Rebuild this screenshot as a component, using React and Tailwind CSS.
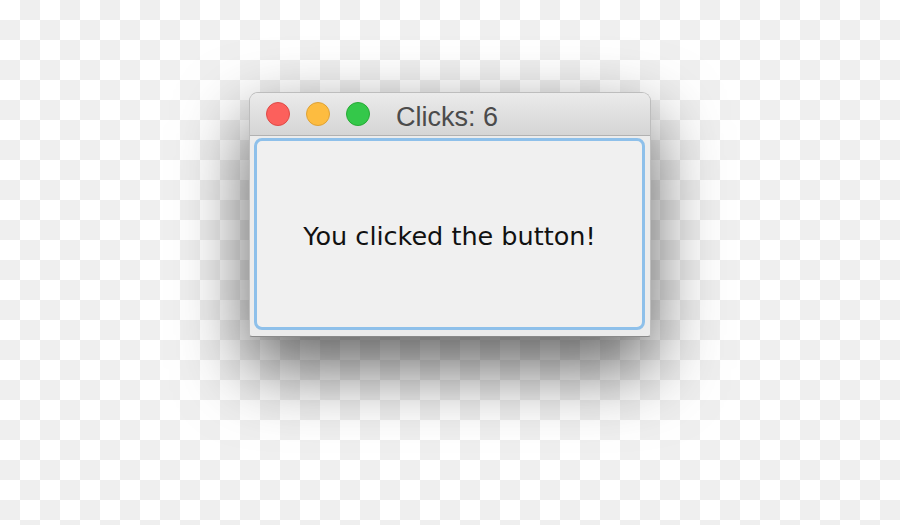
const Light = ({ fill, ring }) => (
    <span className={`w-[24px] h-[24px] rounded-full border ${fill} ${ring}`} />
);

export default function App() {
    return (
        <div className="w-full h-[525px] flex justify-center pt-[92px] bg-[repeating-conic-gradient(#efefef_0%_25%,#ffffff_0%_50%)] bg-[length:40px_40px]">
            <div className="w-[402px] h-[245px] flex flex-col bg-[#ececec] border border-[#bdbdbd] border-b-[#8a8a8a] rounded-t-[9px] rounded-b-[3px] shadow-[0_30px_70px_2px_rgba(0,0,0,0.6)]">
                <div className="h-[43px] flex items-center pl-[16px] rounded-t-[8px] bg-gradient-to-b from-[#ebebeb] to-[#d5d5d5] border-b border-[#b1b1b1]">
                    <div className="flex gap-[16px]">
                        <Light fill="bg-[#fc605c]" ring="border-[#de4a46]" />
                        <Light fill="bg-[#fdbc40]" ring="border-[#dea236]" />
                        <Light fill="bg-[#34c84a]" ring="border-[#27aa35]" />
                    </div>
                    <span className="ml-[26px] mt-[6px] text-[27px] leading-none text-[#4b4b4b] font-['Liberation_Sans',Arial,sans-serif]">
                        Clicks: 6
                    </span>
                </div>
                <div className="flex-1 pt-[2px] pl-[4px] pr-[5px] pb-[6px]">
                    <div className="h-full flex items-center justify-center rounded-[8px] border-[3px] border-[#8ec0ea] bg-[#f0f0f0]">
                        <span className="text-[25.5px] text-[#111] font-['DejaVu_Sans',sans-serif] pt-[5px]">
                            You clicked the button!
                        </span>
                    </div>
                </div>
            </div>
        </div>
    );
}
